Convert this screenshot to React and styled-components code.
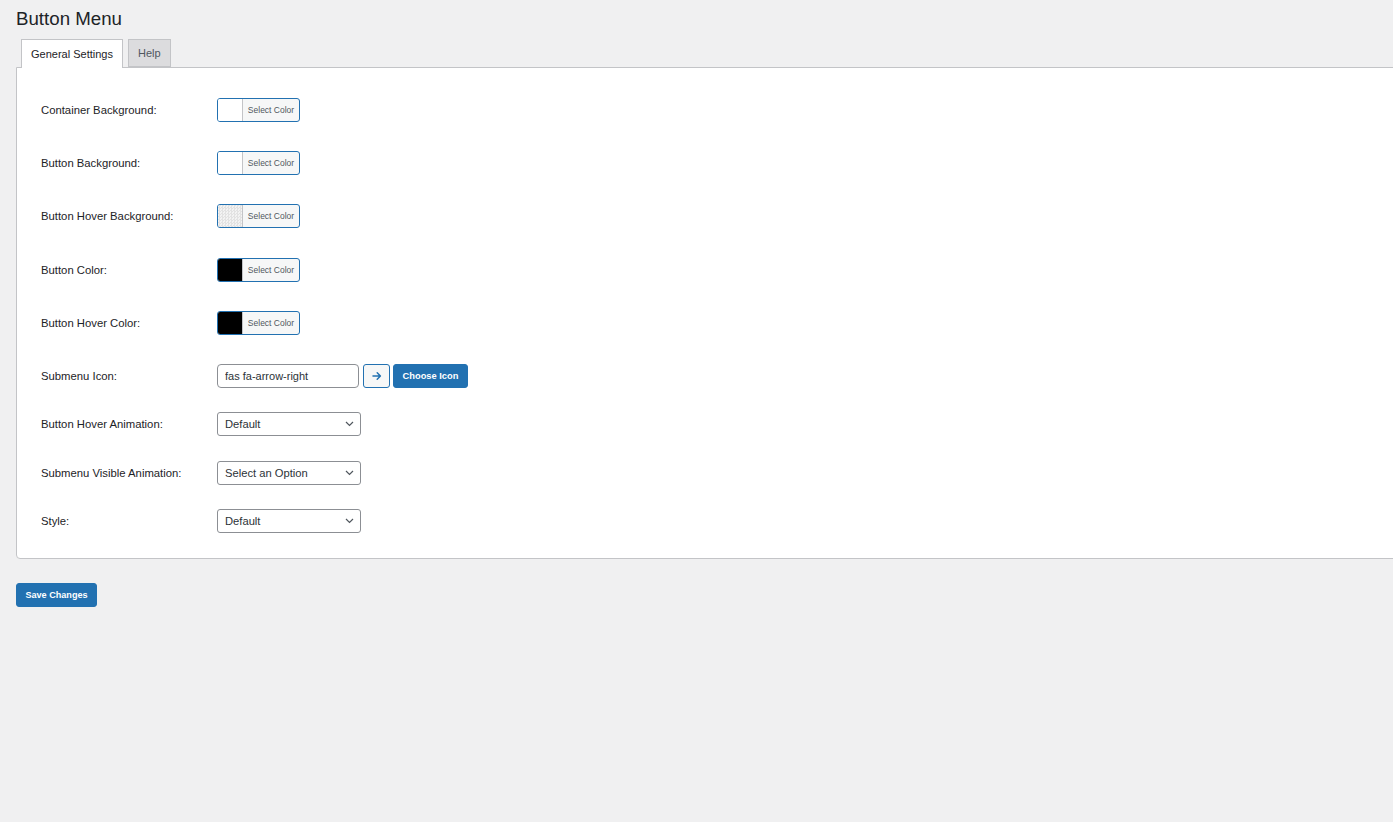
import React from "react";
import styled, { createGlobalStyle } from "styled-components";

const GlobalStyle = createGlobalStyle`
  html, body {
    margin: 0;
    padding: 0;
    background: #f0f0f1;
    font-family: "Liberation Sans", Arial, sans-serif;
    color: #1d2327;
    overflow: hidden;
  }
`;

const colorFields = [
  { label: "Container Background:", swatch: "#ffffff" },
  { label: "Button Background:", swatch: "#ffffff" },
  { label: "Button Hover Background:", swatch: "transparent" },
  { label: "Button Color:", swatch: "#000000" },
  { label: "Button Hover Color:", swatch: "#000000" },
];

const selectFields = [
  { label: "Button Hover Animation:", value: "Default", space: 24 },
  { label: "Submenu Visible Animation:", value: "Select an Option", space: 25 },
  { label: "Style:", value: "Default", space: 24 },
];

const App = () => {
  return (
    <Page>
      <GlobalStyle />
      <Title>Button Menu</Title>
      <Tabs>
        <Tab $active>General Settings</Tab>
        <Tab>Help</Tab>
      </Tabs>
      <Panel>
        {colorFields.map((f, i) => (
          <Row key={f.label} $space={i === 0 ? 0 : i === 3 ? 30 : 29}>
            <Label>{f.label}</Label>
            <ColorPicker type="button">
              <Swatch $color={f.swatch} />
              <ColorText>Select Color</ColorText>
            </ColorPicker>
          </Row>
        ))}
        <Row $space={29}>
          <Label>Submenu Icon:</Label>
          <IconGroup>
            <TextInput defaultValue="fas fa-arrow-right" />
            <PreviewButton type="button">
              <svg width="10" height="10" viewBox="0 0 10 10">
                <path
                  d="M1 5h7.2M5.2 1.8L8.4 5 5.2 8.2"
                  fill="none"
                  stroke="#2271b1"
                  strokeWidth="1.5"
                  strokeLinecap="round"
                  strokeLinejoin="round"
                />
              </svg>
            </PreviewButton>
            <PrimaryButton type="button">Choose Icon</PrimaryButton>
          </IconGroup>
        </Row>
        {selectFields.map((f) => (
          <Row key={f.label} $space={f.space}>
            <Label>{f.label}</Label>
            <Select>
              <span>{f.value}</span>
              <svg width="9" height="6" viewBox="0 0 9 6">
                <path
                  d="M1 1l3.5 3.5L8 1"
                  fill="none"
                  stroke="#50575e"
                  strokeWidth="1.2"
                />
              </svg>
            </Select>
          </Row>
        ))}
      </Panel>
      <SaveButton type="button">Save Changes</SaveButton>
    </Page>
  );
};

export default App;

const Page = styled.div`
  box-sizing: border-box;
  width: 100vw;
  height: 822px;
  padding: 7px 0 0 16px;
  overflow: hidden;
`;

const Title = styled.h1`
  margin: 0;
  font-size: 18.7px;
  font-weight: 400;
  line-height: 23px;
  color: #1d2327;
`;

const Tabs = styled.div`
  display: flex;
  gap: 5px;
  margin: 9px 0 0 5px;
  position: relative;
  z-index: 1;
`;

const Tab = styled.div`
  box-sizing: border-box;
  height: ${(p) => (p.$active ? "29px" : "28px")};
  padding: 0 9px;
  display: flex;
  align-items: center;
  font-size: 11px;
  color: ${(p) => (p.$active ? "#1d2327" : "#50575e")};
  background: ${(p) => (p.$active ? "#ffffff" : "#dcdcde")};
  border: 1px solid #c3c4c7;
  border-bottom: ${(p) => (p.$active ? "none" : "1px solid #c3c4c7")};
`;

const Panel = styled.div`
  box-sizing: border-box;
  margin-top: -1px;
  width: calc(100% + 20px);
  background: #ffffff;
  border: 1px solid #c3c4c7;
  border-radius: 0 0 0 4px;
  padding: 30px 24px 25px;
  display: flex;
  flex-direction: column;
`;

const Row = styled.div`
  display: grid;
  grid-template-columns: 176px auto;
  align-items: center;
  height: 24px;
  margin-top: ${(p) => p.$space}px;
`;

const Label = styled.div`
  font-size: 11.3px;
  color: #1d2327;
`;

const ColorPicker = styled.button`
  box-sizing: border-box;
  display: flex;
  width: 83px;
  height: 24px;
  padding: 0;
  border: 1px solid #2271b1;
  border-radius: 3px;
  background: #f6f7f7;
  overflow: hidden;
  cursor: pointer;
`;

const Swatch = styled.span`
  width: 24px;
  height: 100%;
  border-right: 1px solid #c3c4c7;
  background: ${(p) =>
    p.$color === "transparent"
      ? "repeating-conic-gradient(#e2e2e2 0% 25%, #f3f3f3 0% 50%) 0 0 / 3px 3px"
      : p.$color};
`;

const ColorText = styled.span`
  flex: 1;
  display: flex;
  align-items: center;
  justify-content: center;
  font-family: "Liberation Sans", Arial, sans-serif;
  font-size: 8.5px;
  color: #50575e;
`;

const IconGroup = styled.div`
  display: flex;
  align-items: center;
  gap: 4px;
`;

const TextInput = styled.input`
  box-sizing: border-box;
  width: 142px;
  height: 24px;
  padding: 0 7px;
  border: 1px solid #8c8f94;
  border-radius: 4px;
  font-family: "Liberation Sans", Arial, sans-serif;
  font-size: 11px;
  color: #2c3338;
  outline: none;
`;

const PreviewButton = styled.button`
  box-sizing: border-box;
  width: 27px;
  height: 24px;
  padding: 0;
  display: flex;
  align-items: center;
  justify-content: center;
  border: 1px solid #2271b1;
  border-radius: 3px;
  background: #f6f7f7;
`;

const PrimaryButton = styled.button`
  box-sizing: border-box;
  width: 75px;
  height: 24px;
  padding: 0;
  margin-left: -1px;
  border: 1px solid #2271b1;
  border-radius: 3px;
  background: #2271b1;
  color: #ffffff;
  font-family: "Liberation Sans", Arial, sans-serif;
  font-size: 9.3px;
  font-weight: 700;
`;

const Select = styled.div`
  box-sizing: border-box;
  width: 144px;
  height: 24px;
  padding: 0 6px 0 7px;
  display: flex;
  align-items: center;
  justify-content: space-between;
  border: 1px solid #8c8f94;
  border-radius: 3px;
  font-size: 11.2px;
  color: #2c3338;
  background: #ffffff;
`;

const SaveButton = styled.button`
  box-sizing: border-box;
  margin-top: 24px;
  width: 81px;
  height: 24px;
  padding: 0;
  border: 1px solid #2271b1;
  border-radius: 3px;
  background: #2271b1;
  color: #ffffff;
  font-family: "Liberation Sans", Arial, sans-serif;
  font-size: 9.1px;
  font-weight: 700;
`;
